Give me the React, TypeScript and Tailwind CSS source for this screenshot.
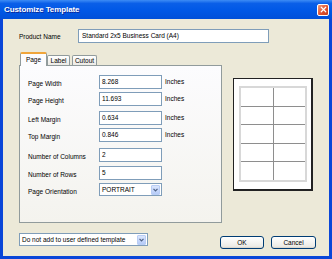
import { X } from 'lucide-react';

const font = "font-['Liberation_Sans',Arial,sans-serif]";

const rows = [
  { label: 'Page Width', value: '8.268', unit: true, gap: 'mt-0' },
  { label: 'Page Height', value: '11.693', unit: true, gap: 'mt-[3px]' },
  { label: 'Left Margin', value: '0.634', unit: true, gap: 'mt-[5px]' },
  { label: 'Top Margin', value: '0.846', unit: true, gap: 'mt-[3px]' },
  { label: 'Number of Columns', value: '2', unit: false, gap: 'mt-[6px]' },
  { label: 'Number of Rows', value: '5', unit: false, gap: 'mt-[4px]' },
];

const DropArrow = () => (
  <div className="w-[9px] h-[10px] mr-[1px] rounded-[1px] border border-[#b9cdf5] bg-[linear-gradient(180deg,#dbe6fd,#b6cbf8)] flex items-center justify-center">
    <svg width="5" height="4" viewBox="0 0 5 4">
      <path d="M0.5 0.8 L2.5 2.8 L4.5 0.8" stroke="#4d6185" strokeWidth="1.2" fill="none" />
    </svg>
  </div>
);

const Select = ({ value, width }: { value: string; width: string }) => (
  <div className={`${width} h-[13px] border border-[#7f9db9] bg-white flex items-center justify-between`}>
    <span className="pl-[2px] leading-[8px]">{value}</span>
    <DropArrow />
  </div>
);

const Field = ({ value }: { value: string }) => (
  <div className="w-[63px] h-[14px] border border-[#7f9db9] bg-white flex items-center pl-[2px] leading-[8px]">
    {value}
  </div>
);

const Button = ({ children, width }: { children: string; width: string }) => (
  <div className={`${width} h-[13px] rounded-[3px] border border-[#003c74] bg-[linear-gradient(180deg,#ffffff,#ecebe6_85%,#d6d0c5)] flex items-center justify-center leading-[8px]`}>
    {children}
  </div>
);

export default function App() {
  return (
    <div className={`${font} text-[6.5px] text-black w-[332px] h-[259px] flex flex-col bg-[#0a46d8]`}>
      {/* title bar */}
      <div className="h-[19px] flex items-center justify-between pl-[4px] pr-[3px] bg-[linear-gradient(180deg,#3d8cf5_0%,#0a5fe8_18%,#0058e6_55%,#0050d9_100%)]">
        <span className="text-white font-bold text-[8px] leading-[10px] tracking-[-0.1px] [text-shadow:1px_1px_0_#0a2a9c]">Customize Template</span>
        <div className="w-[12px] h-[12px] rounded-[2px] border border-white bg-[linear-gradient(135deg,#f09a7a,#e2532f_55%,#c4401e)] flex items-center justify-center">
          <X size={9} color="white" strokeWidth={3.2} />
        </div>
      </div>

      {/* body */}
      <div className="flex-1 mx-[3px] mb-[3px] bg-[#ece9d8] pl-[16px] pr-[13px] pt-[10px] flex flex-col">
        <div className="flex items-center h-[14px]">
          <span className="w-[59px] pt-[2px]">Product Name</span>
          <div className="w-[191px] h-[14px] border border-[#7f9db9] bg-white flex items-center pl-[3px] leading-[8px]">
            Standard 2x5 Business Card (A4)
          </div>
        </div>

        <div className="flex mt-[9px]">
          {/* tab control */}
          <div className="w-[203px] flex flex-col">
            <div className="h-[13px] flex items-end pl-[1px] relative z-10">
              <div className="w-[27px] h-[14px] -mb-[1px] rounded-t-[2px] border border-b-0 border-[#919b9c] border-t-[2px] border-t-[#f0a53a] bg-[#fcfcfe] flex justify-center pt-[2px] leading-[8px]">
                Page
              </div>
              <div className="w-[23px] h-[10px] rounded-t-[2px] border border-b-0 border-[#919b9c] bg-[linear-gradient(180deg,#ffffff,#ecebe6)] flex justify-center pt-[1px] leading-[8px]">
                Label
              </div>
              <div className="w-[25px] h-[10px] ml-[2px] rounded-t-[2px] border border-b-0 border-[#919b9c] bg-[linear-gradient(180deg,#ffffff,#ecebe6)] flex justify-center pt-[1px] leading-[8px]">
                Cutout
              </div>
            </div>
            <div className="h-[158px] border border-[#919b9c] bg-[linear-gradient(180deg,#fcfcfe,#f4f3ee)] pl-[8px] pt-[9px] flex flex-col">
              {rows.map(r => (
                <div key={r.label} className={`flex items-start h-[14px] ${r.gap}`}>
                  <span className="w-[71px] pt-[5px] leading-[8px]">{r.label}</span>
                  <Field value={r.value} />
                  {r.unit && <span className="ml-[3px] pt-[3px] leading-[8px]">Inches</span>}
                </div>
              ))}
              <div className="flex items-start h-[14px] mt-[3px]">
                <span className="w-[71px] pt-[5px] leading-[8px]">Page Orientation</span>
                <Select value="PORTRAIT" width="w-[63px]" />
              </div>
            </div>
          </div>

          {/* preview */}
          <div className="ml-[11px] mt-[26px] w-[80px] h-[113px] bg-white border border-[#222] border-r-[2px] border-b-[2px] pl-[5px] pr-[4px] pt-[7px] pb-[7px]">
            <div className="w-full h-full border-2 border-[#d8d8d8] grid grid-cols-2 grid-rows-5 gap-px bg-[#8e8e8e]">
              {Array.from({ length: 10 }).map((_, i) => (
                <div key={i} className="bg-white" />
              ))}
            </div>
          </div>
        </div>

        {/* footer */}
        <div className="flex items-start mt-[10px]">
          <Select value="Do not add to user defined template" width="w-[129px]" />
          <div className="ml-auto mt-[3px] flex gap-[7px]">
            <Button width="w-[44px]">OK</Button>
            <Button width="w-[45px]">Cancel</Button>
          </div>
        </div>
      </div>
    </div>
  );
}
